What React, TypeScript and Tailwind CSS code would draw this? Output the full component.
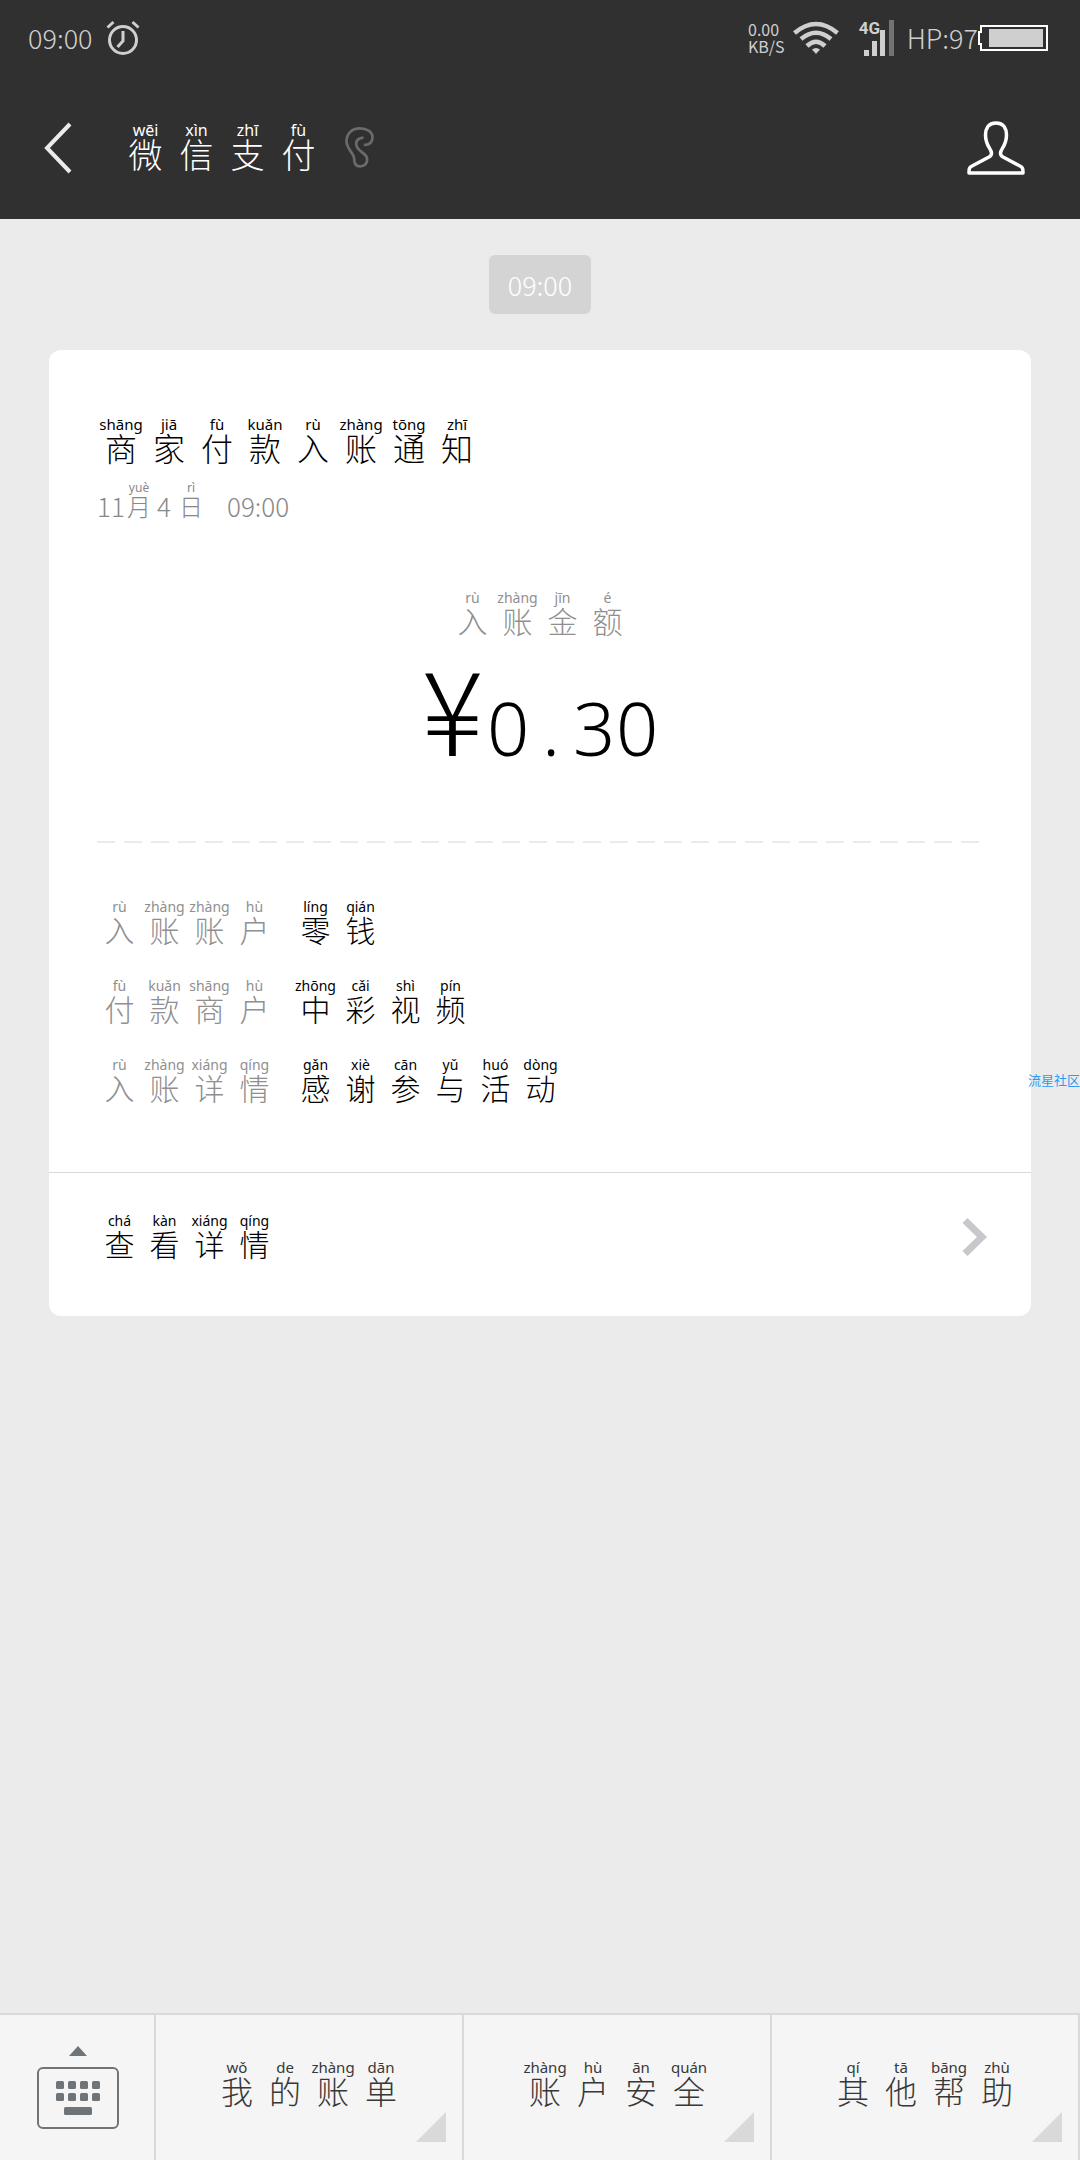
import React from 'react';

type Syllable = [hanzi: string, pinyin: string];

const title: Syllable[] = [['微', 'wēi'], ['信', 'xìn'], ['支', 'zhī'], ['付', 'fù']];

const cardTitle: Syllable[] = [
  ['商', 'shāng'], ['家', 'jiā'], ['付', 'fù'], ['款', 'kuǎn'],
  ['入', 'rù'], ['账', 'zhàng'], ['通', 'tōng'], ['知', 'zhī'],
];

const amountLabel: Syllable[] = [['入', 'rù'], ['账', 'zhàng'], ['金', 'jīn'], ['额', 'é']];

const details: { label: Syllable[]; value: Syllable[] }[] = [
  {
    label: [['入', 'rù'], ['账', 'zhàng'], ['账', 'zhàng'], ['户', 'hù']],
    value: [['零', 'líng'], ['钱', 'qián']],
  },
  {
    label: [['付', 'fù'], ['款', 'kuǎn'], ['商', 'shāng'], ['户', 'hù']],
    value: [['中', 'zhōng'], ['彩', 'cǎi'], ['视', 'shì'], ['频', 'pín']],
  },
  {
    label: [['入', 'rù'], ['账', 'zhàng'], ['详', 'xiáng'], ['情', 'qíng']],
    value: [['感', 'gǎn'], ['谢', 'xiè'], ['参', 'cān'], ['与', 'yǔ'], ['活', 'huó'], ['动', 'dòng']],
  },
];

const viewDetails: Syllable[] = [['查', 'chá'], ['看', 'kàn'], ['详', 'xiáng'], ['情', 'qíng']];

const menus: Syllable[][] = [
  [['我', 'wǒ'], ['的', 'de'], ['账', 'zhàng'], ['单', 'dān']],
  [['账', 'zhàng'], ['户', 'hù'], ['安', 'ān'], ['全', 'quán']],
  [['其', 'qí'], ['他', 'tā'], ['帮', 'bāng'], ['助', 'zhù']],
];

const sizes = {
  sm: { cell: 'w-[45px]', pinyin: 'text-[14px]', hanzi: 'text-[30px] leading-[26px]' },
  md: { cell: 'w-[48px]', pinyin: 'text-[15px]', hanzi: 'text-[32px] leading-[28px]' },
  lg: { cell: 'w-[51px]', pinyin: 'text-[16px]', hanzi: 'text-[34px] leading-[30px]' },
};

// Hanzi with the pinyin reading above each character
const Pinyin = ({ text, size = 'sm' }: { text: Syllable[]; size?: keyof typeof sizes }) => {
  const s = sizes[size];
  return (
    <span className="flex">
      {text.map(([hanzi, pinyin], i) => (
        <span key={i} className={`flex flex-col items-center whitespace-nowrap ${s.cell}`}>
          <span className={`font-['Noto_Sans',sans-serif] font-normal leading-[18px] ${s.pinyin}`}>{pinyin}</span>
          <span className={s.hanzi}>{hanzi}</span>
        </span>
      ))}
    </span>
  );
};

const AlarmIcon = () => (
  <svg width="34" height="36" viewBox="0 0 34 36" fill="none" stroke="#cfcfcf" strokeWidth="3">
    <circle cx="17" cy="20" r="13.500" />
    <path d="M17 11v10l-5.500 6M1.500 7.500l6-5.500M26.500 2l6 5.500" />
  </svg>
);

const WifiIcon = () => (
  <svg width="46" height="34" viewBox="0 0 46 34" fill="none" stroke="#cfcfcf" strokeWidth="4.500">
    <path d="M1.500 12Q23-6 44.500 12M8 18Q23 5.500 38 18M14 25Q23 16.500 32 25" />
    <path d="M19 28.500Q23 25.500 27 28.500L23 33Z" fill="#cfcfcf" stroke="none" />
  </svg>
);

const StatusBar = () => (
  <div className="flex h-[76px] items-center justify-between pl-[28px] pr-[32px] text-[#cfcfcf]">
    <div className="flex items-center gap-[13px]">
      <span className="text-[27px] leading-[30px]">09:00</span>
      <AlarmIcon />
    </div>
    <div className="flex items-center">
      <div className="text-[16px] font-normal leading-[17px]">
        <div>0.00</div>
        <div>KB/S</div>
      </div>
      <span className="ml-[8px]"><WifiIcon /></span>
      <div className="relative ml-[20px] h-[36px] w-[36px]">
        <svg width="36" height="36" viewBox="0 0 36 36" fill="#cfcfcf">
          <path d="M5 30h5v6H5zM13 21h5v15h-5zM21 10h5v26h-5z" />
          <path d="M30 0h5v36h-5z" fill="#737373" />
        </svg>
        <span className="absolute left-0 top-0 font-['Roboto',sans-serif] text-[17px] font-bold leading-[16px]">4G</span>
      </div>
      <span className="ml-[12px] text-[27px] leading-[30px]">HP:97</span>
      <svg width="70" height="26" viewBox="0 0 70 26">
        <path d="M3 1h66v24H3v-6H1V7h2z" fill="none" stroke="#fff" strokeWidth="2" />
        <path d="M11 4h54v18H11z" fill="#cfcfcf" />
      </svg>
    </div>
  </div>
);

const Header = () => (
  <header className="bg-[#303030] text-white">
    <StatusBar />
    <div className="flex h-[143px] items-center pl-[44px] pr-[55px]">
      <button aria-label="返回">
        <svg width="28" height="52" viewBox="0 0 28 52" fill="none" stroke="#ebebeb" strokeWidth="4">
          <path d="M26 2L3 26l23 24" />
        </svg>
      </button>
      <h1 className="ml-[48px] pb-[6px]">
        <Pinyin text={title} size="lg" />
      </h1>
      <svg className="ml-[21px]" width="29" height="41" viewBox="1003 379 86 123" fill="none" stroke="#6b6b6b" strokeWidth="8">
        <path d="M1059 433C1078 433 1085 423 1085 410C1085 393 1067 383 1047 383C1022 383 1007 400 1007 422C1007 445 1030 458 1030 474C1030 490 1035 497 1048 497C1064 497 1071 486 1068 470C1064 458 1036 449 1036 430C1036 418 1044 412 1058 411" />
      </svg>
      <button className="ml-auto" aria-label="账户">
        <svg width="58" height="54" viewBox="0 0 58 54" fill="none" stroke="#fff" strokeWidth="3.500" strokeLinejoin="round">
          <path d="M29 2C21 2 18.500 8 18.500 14C18.500 25 24.500 28 24.500 32C24.500 34 24 35 22 36L5 45C2 46.500 2 48 2 52H56C56 48 56 46.500 53 45L36 36C34 35 33.500 34 33.500 32C33.500 28 39.500 25 39.500 14C39.500 8 37 2 29 2Z" />
        </svg>
      </button>
    </div>
  </header>
);

const PaymentCard = () => (
  <article className="mx-[49px] mt-[36px] rounded-[12px] bg-white text-black">
    <div className="px-[48px] pb-[72px] pt-[65px]">
      <h2>
        <Pinyin text={cardTitle} size="md" />
      </h2>
      <p className="mt-[20px] flex items-end text-[26px] leading-[22px] text-[#888888]">
        <span className="w-[26px]">11</span>
        <span className="flex w-[32px] flex-col items-center">
          <span className="font-['Noto_Sans',sans-serif] text-[12px] font-normal leading-[14px]">yuè</span>
          <span className="text-[24px]">月</span>
        </span>
        <span className="w-[18px] text-center">4</span>
        <span className="flex w-[36px] flex-col items-center">
          <span className="font-['Noto_Sans',sans-serif] text-[12px] font-normal leading-[14px]">rì</span>
          <span className="text-[24px]">日</span>
        </span>
        <span className="ml-[18px]">09:00</span>
      </p>

      <div className="mt-[72px] flex flex-col items-center">
        <div className="text-[#8f8f8f]">
          <Pinyin text={amountLabel} />
        </div>
        <p className="mt-[22px] flex items-baseline leading-[100px]">
          <span className="mr-[3px] text-[116px]">¥</span>
          {'0.30'.split('').map((char, i) => (
            <span key={i} className="w-[43px] text-center font-['Noto_Sans',sans-serif] text-[74px]">{char}</span>
          ))}
        </p>
      </div>

      <div className="mt-[63px] h-[2px] bg-[repeating-linear-gradient(to_right,#ebebeb_0_18px,transparent_18px_27px)]"></div>

      <dl className="mt-[55px] flex flex-col gap-[35px]">
        {details.map((row, i) => (
          <div key={i} className="flex gap-[16px]">
            <dt className="text-[#8f8f8f]"><Pinyin text={row.label} /></dt>
            <dd><Pinyin text={row.value} /></dd>
          </div>
        ))}
      </dl>
    </div>

    <button className="flex w-full items-center justify-between border-t border-[#d9d9d9] pb-[60px] pl-[48px] pr-[43px] pt-[39px]">
      <Pinyin text={viewDetails} />
      <svg className="mt-[6px]" width="26" height="38" viewBox="0 0 26 38" fill="none" stroke="#c8c8cc" strokeWidth="7">
        <path d="M3 2.500L20 19L3 35.500" />
      </svg>
    </button>
  </article>
);

const BottomBar = () => (
  <nav className="flex h-[147px] border-t-2 border-[#d9d9d9] bg-[#f5f5f5] text-[#383838]">
    <button className="flex w-[156px] flex-none justify-center border-r-2 border-[#d9d9d9] pl-[2px] pt-[31px]" aria-label="键盘">
      <svg width="82" height="84" viewBox="0 0 82 84" fill="#6f7479">
        <path d="M41 0l9 10H32z" />
        <rect x="1" y="22" width="80" height="60" rx="5" fill="none" stroke="#6f7479" strokeWidth="2" />
        {[19, 31, 43, 55].map((x) => (
          <g key={x}>
            <rect x={x} y="35" width="8" height="8" rx="1.500" />
            <rect x={x} y="47" width="8" height="8" rx="1.500" />
          </g>
        ))}
        <rect x="27" y="61" width="28" height="8" rx="1.500" />
      </svg>
    </button>
    {menus.map((menu, i) => (
      <button key={i} className="relative flex flex-1 items-center justify-center border-r-2 border-[#d9d9d9] pb-[13px]">
        <Pinyin text={menu} size="md" />
        <svg className="absolute bottom-[18px] right-[16px]" width="30" height="30" viewBox="0 0 30 30">
          <path d="M30 0v30H0z" fill="#d9d9d9" />
        </svg>
      </button>
    ))}
  </nav>
);

const App = () => {
  return (
    <div className="relative flex min-h-screen flex-col overflow-hidden bg-[#ebebeb] font-['Noto_Sans_CJK_SC',sans-serif] font-light">
      <Header />
      <main className="flex-1">
        <div className="mt-[36px] flex justify-center">
          <time className="rounded-[6px] bg-[#d4d4d4] px-[19px] text-[27px] leading-[59px] text-white">09:00</time>
        </div>
        <PaymentCard />
      </main>
      <BottomBar />

      {/* Floating community mark */}
      <span className="absolute right-0 top-[1070px] text-[13px] font-normal leading-[20px] text-[#2f9bf0]">流星社区</span>
    </div>
  );
};

export default App;
